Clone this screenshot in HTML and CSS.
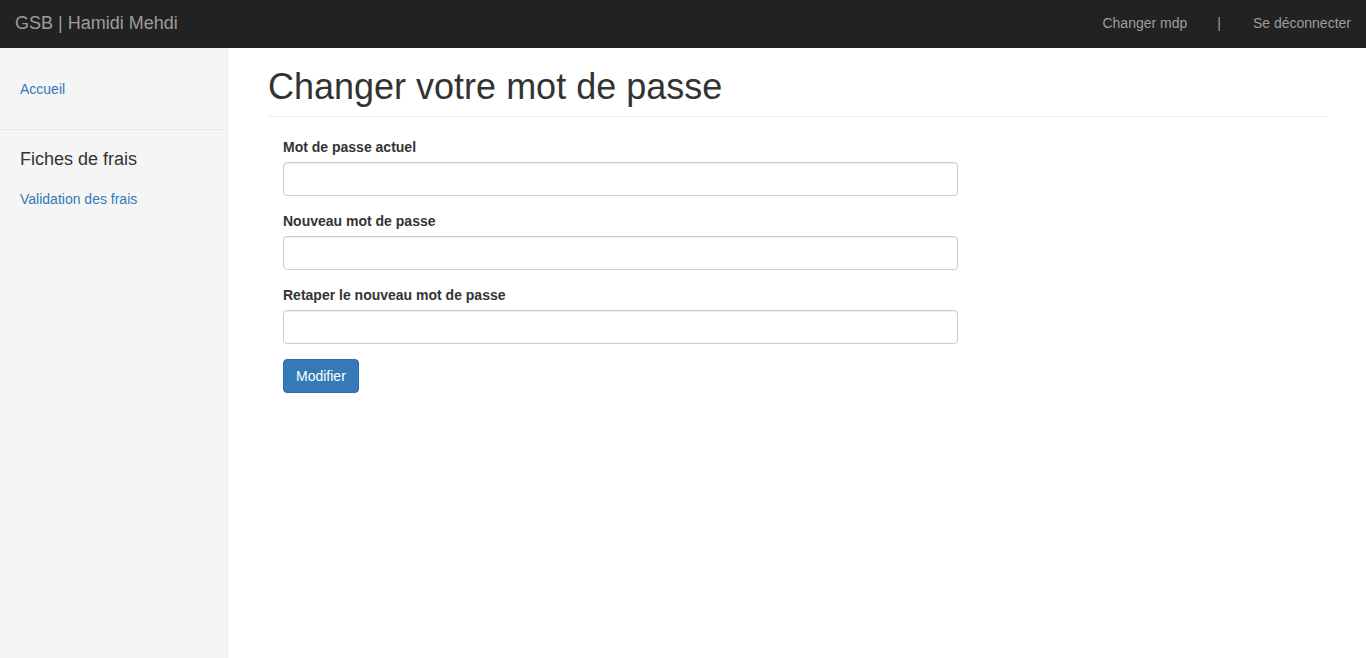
FILE: index.html
```html
<!DOCTYPE html>
<html lang="fr">
<head>
<meta charset="utf-8">
<title>GSB - Changer mot de passe</title>
<link rel="stylesheet" href="styles.css">
</head>
<body>
<nav class="navbar">
  <a class="brand" href="#">GSB | Hamidi Mehdi</a>
  <ul class="nav-right">
    <li><a href="#">Changer mdp</a></li>
    <li class="sep">|</li>
    <li><a href="#">Se déconnecter</a></li>
  </ul>
</nav>
<div class="layout">
  <aside class="sidebar">
    <ul class="side-nav first">
      <li><a href="#">Accueil</a></li>
    </ul>
    <div class="side-section">
      <h4 class="side-title">Fiches de frais</h4>
      <ul class="side-nav">
        <li><a href="#">Validation des frais</a></li>
      </ul>
    </div>
  </aside>
  <main class="main">
    <h1 class="page-header">Changer votre mot de passe</h1>
    <form class="pwd-form">
      <div class="form-group">
        <label for="old">Mot de passe actuel</label>
        <input type="password" id="old" class="form-control">
      </div>
      <div class="form-group">
        <label for="new">Nouveau mot de passe</label>
        <input type="password" id="new" class="form-control">
      </div>
      <div class="form-group">
        <label for="rep">Retaper le nouveau mot de passe</label>
        <input type="password" id="rep" class="form-control">
      </div>
      <button type="submit" class="btn-primary">Modifier</button>
    </form>
  </main>
</div>
</body>
</html>
```

FILE: styles.css
```css
* { box-sizing: border-box; }
html, body { height: 100%; }
body {
  margin: 0;
  font-family: "Liberation Sans", Arial, sans-serif;
  font-size: 14px;
  line-height: 1.42857;
  color: #333;
  background: #fff;
  display: flex;
  flex-direction: column;
}
a { text-decoration: none; }

.navbar {
  height: 48px;
  background: #222;
  display: flex;
  align-items: center;
  justify-content: space-between;
  flex-shrink: 0;
}
.brand {
  padding: 0 15px;
  font-size: 18px;
  color: #9d9d9d;
  line-height: 20px;
  position: relative;
  top: -1px;
}
.nav-right {
  list-style: none;
  margin: 0 0 2px;
  padding: 0;
  display: flex;
  align-items: center;
}
.nav-right li {
  padding: 0 15px;
  line-height: 20px;
  color: #9d9d9d;
}
.nav-right a { color: #9d9d9d; }
.nav-right .sep { padding: 0 17px 0 15px; }

.layout {
  flex: 1;
  display: flex;
}
.sidebar {
  width: 228px;
  flex-shrink: 0;
  background: #f5f5f5;
  border-right: 1px solid #eee;
  padding-top: 22px;
}
.side-nav {
  list-style: none;
  margin: 0;
  padding: 0;
}
.side-nav a {
  display: block;
  padding: 10px 20px;
  color: #337ab7;
}
.side-nav.first { margin-bottom: 19px; }
.side-section {
  border-top: 1px solid #eaeaea;
  padding-top: 18px;
}
.side-title {
  margin: 0 0 10px;
  padding: 0 20px;
  font-size: 18px;
  font-weight: 500;
  line-height: 22px;
  color: #333;
}

.main {
  flex: 1;
  padding: 19px 40px 0 40px;
}
.page-header {
  margin: 0 0 20px;
  padding-bottom: 9px;
  font-size: 36px;
  font-weight: 500;
  line-height: 40px;
  color: #333;
  border-bottom: 1px solid #eee;
}
.pwd-form {
  width: 675px;
  margin-left: 15px;
}
.form-group { margin-bottom: 15px; }
label {
  display: block;
  font-weight: bold;
  margin-bottom: 5px;
  line-height: 20px;
}
.form-control {
  display: block;
  width: 100%;
  height: 34px;
  padding: 6px 12px;
  font-size: 14px;
  border: 1px solid #ccc;
  border-radius: 4px;
  box-shadow: inset 0 1px 1px rgba(0,0,0,.075);
  background: #fff;
}
.btn-primary {
  height: 34px;
  padding: 6px 12px;
  font-family: inherit;
  font-size: 14px;
  line-height: 20px;
  color: #fff;
  background: #337ab7;
  border: 1px solid #2e6da4;
  border-radius: 4px;
}
```
